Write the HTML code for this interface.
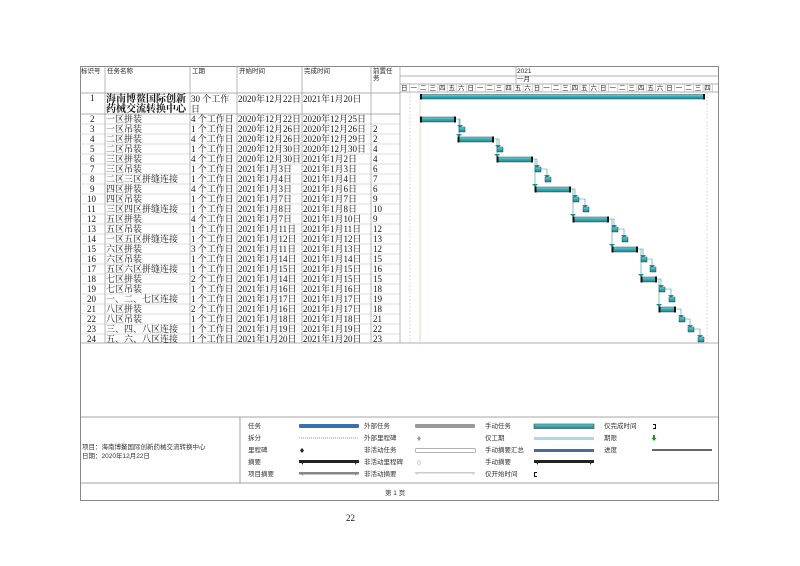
<!DOCTYPE html>
<html><head><meta charset="utf-8"><style>
html,body{margin:0;padding:0;background:#fff;width:800px;height:566px;overflow:hidden}
svg{display:block}
.t{font-family:"Liberation Serif","Noto Serif CJK SC",serif;font-size:9px;fill:#111}
.s{font-family:"Liberation Sans","Noto Sans CJK SC",sans-serif;font-size:6.5px;fill:#333}
.h{font-family:"Liberation Sans","Noto Sans CJK SC",sans-serif;font-size:6.5px;fill:#222}
.b{font-family:"Liberation Serif","Noto Serif CJK SC",serif;font-size:10px;font-weight:bold;fill:#111}
</style></head><body>
<svg width="800" height="566" viewBox="0 0 800 566" xmlns="http://www.w3.org/2000/svg">
<defs>
<linearGradient id="tg" x1="0" y1="0" x2="0" y2="1"><stop offset="0" stop-color="#7fd3d6"/><stop offset="0.5" stop-color="#2fa8ad"/><stop offset="1" stop-color="#1e8e93"/></linearGradient>
</defs>
<!-- outer frame -->
<rect x="80.5" y="66.5" width="638" height="434" fill="none" stroke="#888" stroke-width="1"/>
<!-- header column lines -->
<g stroke="#999" stroke-width="0.7">
<line x1="105" y1="66" x2="105" y2="343"/>
<line x1="190" y1="66" x2="190" y2="343"/>
<line x1="237" y1="66" x2="237" y2="343"/>
<line x1="302" y1="66" x2="302" y2="343"/>
<line x1="371" y1="66" x2="371" y2="343"/>
<line x1="400" y1="66" x2="400" y2="343"/>
<line x1="80" y1="93" x2="400" y2="93"/>
<line x1="80" y1="114" x2="400" y2="114"/>
<line x1="400" y1="76" x2="718" y2="76"/>
<line x1="400" y1="84" x2="718" y2="84"/>
<line x1="400" y1="92" x2="718" y2="92"/>
<line x1="516" y1="66" x2="516" y2="84"/>
<line x1="80" y1="343" x2="718" y2="343"/>
</g>
<g stroke="#bbb" stroke-width="0.5">
<line x1="80" y1="124" x2="400" y2="124"/><line x1="80" y1="134" x2="400" y2="134"/><line x1="80" y1="144" x2="400" y2="144"/><line x1="80" y1="154" x2="400" y2="154"/><line x1="80" y1="164" x2="400" y2="164"/><line x1="80" y1="174" x2="400" y2="174"/><line x1="80" y1="184" x2="400" y2="184"/><line x1="80" y1="194" x2="400" y2="194"/><line x1="80" y1="204" x2="400" y2="204"/><line x1="80" y1="214" x2="400" y2="214"/><line x1="80" y1="224" x2="400" y2="224"/><line x1="80" y1="234" x2="400" y2="234"/><line x1="80" y1="244" x2="400" y2="244"/><line x1="80" y1="254" x2="400" y2="254"/><line x1="80" y1="264" x2="400" y2="264"/><line x1="80" y1="274" x2="400" y2="274"/><line x1="80" y1="284" x2="400" y2="284"/><line x1="80" y1="294" x2="400" y2="294"/><line x1="80" y1="304" x2="400" y2="304"/><line x1="80" y1="314" x2="400" y2="314"/><line x1="80" y1="324" x2="400" y2="324"/><line x1="80" y1="334" x2="400" y2="334"/>
</g>
<!-- headers -->
<text class="h" x="81" y="73">标识号</text>
<text class="h" x="107" y="73">任务名称</text>
<text class="h" x="192" y="73">工期</text>
<text class="h" x="239" y="73">开始时间</text>
<text class="h" x="304" y="73">完成时间</text>
<text class="h" x="373" y="73">前置任</text>
<text class="h" x="373" y="80">务</text>
<text class="h" x="517" y="73">2021</text>
<text class="h" x="517" y="81">一月</text>
<!-- day header -->
<g class="h" font-size="6.5">
<text x="401" y="90">日</text><text x="410.5" y="90">一</text><text x="420" y="90">二</text><text x="429.5" y="90">三</text><text x="439" y="90">四</text><text x="448.5" y="90">五</text><text x="458" y="90">六</text>
<text x="467.4" y="90">日</text><text x="476.9" y="90">一</text><text x="486.4" y="90">二</text><text x="495.8" y="90">三</text><text x="505.3" y="90">四</text><text x="514.8" y="90">五</text><text x="524.2" y="90">六</text>
<text x="533.7" y="90">日</text><text x="543.2" y="90">一</text><text x="552.7" y="90">二</text><text x="562.1" y="90">三</text><text x="571.6" y="90">四</text><text x="581.1" y="90">五</text><text x="590.5" y="90">六</text>
<text x="600" y="90">日</text><text x="609.5" y="90">一</text><text x="619" y="90">二</text><text x="628.4" y="90">三</text><text x="637.9" y="90">四</text><text x="647.4" y="90">五</text><text x="656.8" y="90">六</text>
<text x="666.3" y="90">日</text><text x="675.8" y="90">一</text><text x="685.3" y="90">二</text><text x="694.7" y="90">三</text><text x="704.2" y="90">四</text>
</g>
<g stroke="#aaa" stroke-width="0.5">
<line x1="409.5" y1="84" x2="409.5" y2="92"/><line x1="419" y1="84" x2="419" y2="92"/><line x1="428.4" y1="84" x2="428.4" y2="92"/><line x1="437.9" y1="84" x2="437.9" y2="92"/><line x1="447.4" y1="84" x2="447.4" y2="92"/><line x1="456.8" y1="84" x2="456.8" y2="92"/><line x1="466.3" y1="84" x2="466.3" y2="92"/><line x1="475.8" y1="84" x2="475.8" y2="92"/><line x1="485.3" y1="84" x2="485.3" y2="92"/><line x1="494.7" y1="84" x2="494.7" y2="92"/><line x1="504.2" y1="84" x2="504.2" y2="92"/><line x1="513.7" y1="84" x2="513.7" y2="92"/><line x1="523.1" y1="84" x2="523.1" y2="92"/><line x1="532.6" y1="84" x2="532.6" y2="92"/><line x1="542.1" y1="84" x2="542.1" y2="92"/><line x1="551.6" y1="84" x2="551.6" y2="92"/><line x1="561" y1="84" x2="561" y2="92"/><line x1="570.5" y1="84" x2="570.5" y2="92"/><line x1="580" y1="84" x2="580" y2="92"/><line x1="589.4" y1="84" x2="589.4" y2="92"/><line x1="598.9" y1="84" x2="598.9" y2="92"/><line x1="608.4" y1="84" x2="608.4" y2="92"/><line x1="617.9" y1="84" x2="617.9" y2="92"/><line x1="627.3" y1="84" x2="627.3" y2="92"/><line x1="636.8" y1="84" x2="636.8" y2="92"/><line x1="646.3" y1="84" x2="646.3" y2="92"/><line x1="655.7" y1="84" x2="655.7" y2="92"/><line x1="665.2" y1="84" x2="665.2" y2="92"/><line x1="674.7" y1="84" x2="674.7" y2="92"/><line x1="684.2" y1="84" x2="684.2" y2="92"/><line x1="693.6" y1="84" x2="693.6" y2="92"/><line x1="703.1" y1="84" x2="703.1" y2="92"/><line x1="712.6" y1="84" x2="712.6" y2="92"/>
</g>
<!-- dotted verticals -->
<line x1="410" y1="93" x2="410" y2="343" stroke="#bbb" stroke-width="0.7" stroke-dasharray="1.5,2"/>
<line x1="707" y1="93" x2="707" y2="343" stroke="#bbb" stroke-width="0.7" stroke-dasharray="1.5,2"/>
<line x1="420" y1="93" x2="420" y2="343" stroke="#f3c9b8" stroke-width="0.8"/>
<!-- row 1 -->
<text class="t" x="90" y="101">1</text>
<text class="b" x="106" y="102">海南博鳌国际创新</text>
<text class="b" x="106" y="112">药械交流转换中心</text>
<text class="t" x="191" y="102">30 个工作</text>
<text class="t" x="191" y="112">日</text>
<text class="t" x="238" y="102">2020年12月22日</text>
<text class="t" x="303" y="102">2021年1月20日</text>
<!-- rows -->
<g class="t">
<text x="90" y="122">2</text><text x="106" y="122">一区拼装</text><text x="191" y="122">4 个工作日</text><text x="238" y="122">2020年12月22日</text><text x="303" y="122">2020年12月25日</text>
<text x="90" y="132">3</text><text x="106" y="132">一区吊装</text><text x="191" y="132">1 个工作日</text><text x="238" y="132">2020年12月26日</text><text x="303" y="132">2020年12月26日</text><text x="373" y="132">2</text>
<text x="90" y="142">4</text><text x="106" y="142">二区拼装</text><text x="191" y="142">4 个工作日</text><text x="238" y="142">2020年12月26日</text><text x="303" y="142">2020年12月29日</text><text x="373" y="142">2</text>
<text x="90" y="152">5</text><text x="106" y="152">二区吊装</text><text x="191" y="152">1 个工作日</text><text x="238" y="152">2020年12月30日</text><text x="303" y="152">2020年12月30日</text><text x="373" y="152">4</text>
<text x="90" y="162">6</text><text x="106" y="162">三区拼装</text><text x="191" y="162">4 个工作日</text><text x="238" y="162">2020年12月30日</text><text x="303" y="162">2021年1月2日</text><text x="373" y="162">4</text>
<text x="90" y="172">7</text><text x="106" y="172">三区吊装</text><text x="191" y="172">1 个工作日</text><text x="238" y="172">2021年1月3日</text><text x="303" y="172">2021年1月3日</text><text x="373" y="172">6</text>
<text x="90" y="182">8</text><text x="106" y="182">二区三区拼缝连接</text><text x="191" y="182">1 个工作日</text><text x="238" y="182">2021年1月4日</text><text x="303" y="182">2021年1月4日</text><text x="373" y="182">7</text>
<text x="90" y="192">9</text><text x="106" y="192">四区拼装</text><text x="191" y="192">4 个工作日</text><text x="238" y="192">2021年1月3日</text><text x="303" y="192">2021年1月6日</text><text x="373" y="192">6</text>
<text x="87" y="202">10</text><text x="106" y="202">四区吊装</text><text x="191" y="202">1 个工作日</text><text x="238" y="202">2021年1月7日</text><text x="303" y="202">2021年1月7日</text><text x="373" y="202">9</text>
<text x="87" y="212">11</text><text x="106" y="212">三区四区拼缝连接</text><text x="191" y="212">1 个工作日</text><text x="238" y="212">2021年1月8日</text><text x="303" y="212">2021年1月8日</text><text x="373" y="212">10</text>
<text x="87" y="222">12</text><text x="106" y="222">五区拼装</text><text x="191" y="222">4 个工作日</text><text x="238" y="222">2021年1月7日</text><text x="303" y="222">2021年1月10日</text><text x="373" y="222">9</text>
<text x="87" y="232">13</text><text x="106" y="232">五区吊装</text><text x="191" y="232">1 个工作日</text><text x="238" y="232">2021年1月11日</text><text x="303" y="232">2021年1月11日</text><text x="373" y="232">12</text>
<text x="87" y="242">14</text><text x="106" y="242">一区五区拼缝连接</text><text x="191" y="242">1 个工作日</text><text x="238" y="242">2021年1月12日</text><text x="303" y="242">2021年1月12日</text><text x="373" y="242">13</text>
<text x="87" y="252">15</text><text x="106" y="252">六区拼装</text><text x="191" y="252">3 个工作日</text><text x="238" y="252">2021年1月11日</text><text x="303" y="252">2021年1月13日</text><text x="373" y="252">12</text>
<text x="87" y="262">16</text><text x="106" y="262">六区吊装</text><text x="191" y="262">1 个工作日</text><text x="238" y="262">2021年1月14日</text><text x="303" y="262">2021年1月14日</text><text x="373" y="262">15</text>
<text x="87" y="272">17</text><text x="106" y="272">五区六区拼缝连接</text><text x="191" y="272">1 个工作日</text><text x="238" y="272">2021年1月15日</text><text x="303" y="272">2021年1月15日</text><text x="373" y="272">16</text>
<text x="87" y="282">18</text><text x="106" y="282">七区拼装</text><text x="191" y="282">2 个工作日</text><text x="238" y="282">2021年1月14日</text><text x="303" y="282">2021年1月15日</text><text x="373" y="282">15</text>
<text x="87" y="292">19</text><text x="106" y="292">七区吊装</text><text x="191" y="292">1 个工作日</text><text x="238" y="292">2021年1月16日</text><text x="303" y="292">2021年1月16日</text><text x="373" y="292">18</text>
<text x="87" y="302">20</text><text x="106" y="302">一、二、七区连接</text><text x="191" y="302">1 个工作日</text><text x="238" y="302">2021年1月17日</text><text x="303" y="302">2021年1月17日</text><text x="373" y="302">19</text>
<text x="87" y="312">21</text><text x="106" y="312">八区拼装</text><text x="191" y="312">2 个工作日</text><text x="238" y="312">2021年1月16日</text><text x="303" y="312">2021年1月17日</text><text x="373" y="312">18</text>
<text x="87" y="322">22</text><text x="106" y="322">八区吊装</text><text x="191" y="322">1 个工作日</text><text x="238" y="322">2021年1月18日</text><text x="303" y="322">2021年1月18日</text><text x="373" y="322">21</text>
<text x="87" y="332">23</text><text x="106" y="332">三、四、八区连接</text><text x="191" y="332">1 个工作日</text><text x="238" y="332">2021年1月19日</text><text x="303" y="332">2021年1月19日</text><text x="373" y="332">22</text>
<text x="87" y="342">24</text><text x="106" y="342">五、六、八区连接</text><text x="191" y="342">1 个工作日</text><text x="238" y="342">2021年1月20日</text><text x="303" y="342">2021年1月20日</text><text x="373" y="342">23</text>
</g>
<!-- connectors -->
<g stroke="#2a9a9e" stroke-width="0.6" fill="none">
<path d="M455 119 H460 V127"/><path d="M459 119 V137"/>
<path d="M493 139 H499 V147"/><path d="M497 139 V157"/>
<path d="M532 159 H537 V167"/><path d="M541 169 H547 V177"/><path d="M535 159 V187"/>
<path d="M570 189 H575 V197"/><path d="M578 199 H585 V207"/><path d="M573 189 V217"/>
<path d="M608 219 H614 V227"/><path d="M617 229 H624 V237"/><path d="M612 219 V247"/>
<path d="M637 249 H643 V257"/><path d="M646 259 H652 V267"/><path d="M641 249 V277"/>
<path d="M656 279 H661 V287"/><path d="M665 289 H671 V297"/><path d="M659 279 V307"/>
<path d="M675 309 H681 V317"/><path d="M684 319 H690 V327"/><path d="M693 329 H700 V337"/>
</g>
<g fill="#1e8e93">
<path d="M457 125h6l-3 3z"/><path d="M456 134h6l-3 3z"/><path d="M495 145h6l-3 3z"/><path d="M494 154h6l-3 3z"/>
<path d="M534 165h6l-3 3z"/><path d="M544 175h6l-3 3z"/><path d="M532 184h6l-3 3z"/>
<path d="M572 195h6l-3 3z"/><path d="M582 205h6l-3 3z"/><path d="M570 214h6l-3 3z"/>
<path d="M611 225h6l-3 3z"/><path d="M621 235h6l-3 3z"/><path d="M609 244h6l-3 3z"/>
<path d="M640 255h6l-3 3z"/><path d="M649 265h6l-3 3z"/><path d="M638 274h6l-3 3z"/>
<path d="M658 285h6l-3 3z"/><path d="M668 295h6l-3 3z"/><path d="M656 304h6l-3 3z"/>
<path d="M678 315h6l-3 3z"/><path d="M687 325h6l-3 3z"/><path d="M697 335h6l-3 3z"/>
</g>
<!-- bars -->
<g fill="url(#tg)" stroke="#123" stroke-width="0.4">
<rect x="420.7" y="94.5" width="283.3" height="4.5"/>
<rect x="421" y="117" width="34" height="5"/>
<rect x="459" y="127" width="6" height="5"/>
<rect x="458" y="137" width="35" height="5"/>
<rect x="497" y="147" width="6" height="5"/>
<rect x="497" y="157" width="35" height="5"/>
<rect x="535" y="167" width="6" height="5"/>
<rect x="545" y="177" width="6" height="5"/>
<rect x="535" y="187" width="35" height="5"/>
<rect x="573" y="197" width="6" height="5"/>
<rect x="583" y="207" width="6" height="5"/>
<rect x="573" y="217" width="35" height="5"/>
<rect x="612" y="227" width="6" height="5"/>
<rect x="622" y="237" width="6" height="5"/>
<rect x="612" y="247" width="25" height="5"/>
<rect x="641" y="257" width="6" height="5"/>
<rect x="650" y="267" width="6" height="5"/>
<rect x="641" y="277" width="15" height="5"/>
<rect x="659" y="287" width="6" height="5"/>
<rect x="669" y="297" width="6" height="5"/>
<rect x="659" y="307" width="16" height="5"/>
<rect x="679" y="317" width="6" height="5"/>
<rect x="688" y="327" width="6" height="5"/>
<rect x="698" y="337" width="6" height="5"/>
</g>
<g fill="#111">
<rect x="420" y="94" width="2" height="5.5"/><rect x="703" y="94" width="2" height="5.5"/>
<rect x="420" y="116.5" width="2" height="6"/><rect x="454" y="116.5" width="2" height="6"/>
<rect x="457.5" y="136.5" width="2" height="6"/><rect x="492" y="136.5" width="2" height="6"/>
<rect x="496.5" y="156.5" width="2" height="6"/><rect x="531" y="156.5" width="2" height="6"/>
<rect x="534.5" y="186.5" width="2" height="6"/><rect x="569" y="186.5" width="2" height="6"/>
<rect x="572.5" y="216.5" width="2" height="6"/><rect x="607" y="216.5" width="2" height="6"/>
<rect x="611.5" y="246.5" width="2" height="6"/><rect x="636" y="246.5" width="2" height="6"/>
<rect x="640.5" y="276.5" width="2" height="6"/><rect x="655" y="276.5" width="2" height="6"/>
<rect x="658.5" y="306.5" width="2" height="6"/><rect x="674" y="306.5" width="2" height="6"/>
</g>
<!-- legend -->
<g stroke="#888" stroke-width="0.8">
<line x1="80" y1="417" x2="718" y2="417"/>
<line x1="80" y1="483" x2="718" y2="483"/>
<line x1="240" y1="417" x2="240" y2="483"/>
</g>
<text class="s" x="82" y="449">项目：海南博鳌国际创新药械交流转换中心</text>
<text class="s" x="82" y="458">日期：2020年12月22日</text>
<g class="s">
<text x="248" y="428">任务</text><text x="248" y="440">拆分</text><text x="248" y="452">里程碑</text><text x="248" y="464">摘要</text><text x="248" y="476">项目摘要</text>
<text x="364" y="428">外部任务</text><text x="364" y="440">外部里程碑</text><text x="364" y="452">非活动任务</text><text x="364" y="464">非活动里程碑</text><text x="364" y="476">非活动摘要</text>
<text x="485" y="428">手动任务</text><text x="485" y="440">仅工期</text><text x="485" y="452">手动摘要汇总</text><text x="485" y="464">手动摘要</text><text x="485" y="476">仅开始时间</text>
<text x="604" y="428">仅完成时间</text><text x="604" y="440">期限</text><text x="604" y="452">进度</text>
</g>
<rect x="299" y="424" width="60" height="4" fill="#3a6fb0" rx="1"/>
<line x1="299" y1="438" x2="359" y2="438" stroke="#6a6ab8" stroke-width="0.8" stroke-dasharray="1,1"/>
<path d="M302 448l2 2.5-2 2.5-2-2.5z" fill="#222"/>
<rect x="299" y="460" width="60" height="3" fill="#222"/><path d="M299 460h4v5z M359 460h-4v5z" fill="#222"/>
<rect x="299" y="472" width="60" height="2.5" fill="#888"/><path d="M299 472h4v4z M359 472h-4v4z" fill="#888"/>
<rect x="415" y="424" width="60" height="4" fill="#999" rx="1"/>
<path d="M419 436l2 2.5-2 2.5-2-2.5z" fill="#999"/>
<rect x="415.5" y="448.5" width="60" height="4" fill="none" stroke="#999" stroke-width="0.7" rx="1"/>
<path d="M419 460l2 2.5-2 2.5-2-2.5z" fill="none" stroke="#999" stroke-width="0.5"/>
<rect x="415" y="472" width="60" height="1.5" fill="#ccc"/><path d="M415 472h4l-2 3z M475 472h-4l2 3z" fill="#ccc"/>
<rect x="534" y="424" width="60" height="4.5" fill="url(#tg)" stroke="#123" stroke-width="0.5"/>
<rect x="534" y="437" width="60" height="3" fill="#a9d8ea"/>
<rect x="534" y="449" width="60" height="3" fill="#4b6c9a"/>
<rect x="534" y="460" width="60" height="3" fill="#222"/><path d="M534 460h4v5z M594 460h-4v5z" fill="#222"/>
<path d="M534 472h3v1h-2v3h2v1h-3z" fill="#111"/>
<path d="M653 424h3v5h-3v-1h2v-3h-2z" fill="#111"/>
<path d="M653 435v3h-1.5l2.5 3 2.5-3h-1.5v-3z" fill="#2a8a2a"/>
<rect x="652" y="449" width="60" height="2" fill="#666"/>
<text class="s" x="385" y="495" font-size="7">第 1 页</text>
<text class="t" x="346" y="521" font-size="9">22</text>
</svg>
</body></html>
